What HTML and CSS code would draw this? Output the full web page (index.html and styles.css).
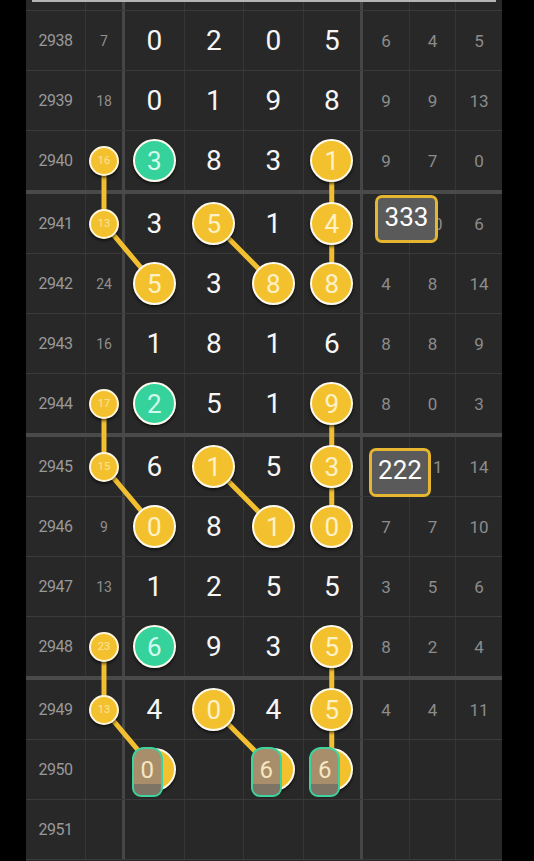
FILE: index.html
```html
<!DOCTYPE html>
<html lang="en">
<head>
    <meta charset="UTF-8">
    <meta name="viewport" content="width=device-width, initial-scale=1.0">
    <title>Trend Chart</title>
    <link rel="stylesheet" href="styles.css">
</head>
<body>
    <div class="board">
        <div class="top-line"></div>
        <div class="row stub">
            <div class="c"></div><div class="c sum"></div><div class="c"></div><div class="c"></div><div class="c"></div><div class="c d4"></div><div class="c"></div><div class="c"></div><div class="c last"></div>
        </div>

        <div class="row">
            <div class="c issue">2938</div><div class="c sum">7</div>
            <div class="c d">0</div><div class="c d">2</div><div class="c d">0</div><div class="c d d4">5</div>
            <div class="c r">6</div><div class="c r">4</div><div class="c r last">5</div>
        </div>
        <div class="row">
            <div class="c issue">2939</div><div class="c sum">18</div>
            <div class="c d">0</div><div class="c d">1</div><div class="c d">9</div><div class="c d d4">8</div>
            <div class="c r">9</div><div class="c r">9</div><div class="c r last">13</div>
        </div>
        <div class="row end">
            <div class="c issue">2940</div><div class="c sum"><span class="mini">16</span></div>
            <div class="c d"><span class="ball green">3</span></div><div class="c d">8</div><div class="c d">3</div><div class="c d d4"><span class="ball">1</span></div>
            <div class="c r">9</div><div class="c r">7</div><div class="c r last">0</div>
        </div>

        <div class="row">
            <div class="c issue">2941</div><div class="c sum"><span class="mini">13</span></div>
            <div class="c d">3</div><div class="c d"><span class="ball">5</span></div><div class="c d">1</div><div class="c d d4"><span class="ball">4</span></div>
            <div class="c r"></div><div class="c r peek">0</div><div class="c r last">6</div>
        </div>
        <div class="row">
            <div class="c issue">2942</div><div class="c sum">24</div>
            <div class="c d"><span class="ball">5</span></div><div class="c d">3</div><div class="c d"><span class="ball">8</span></div><div class="c d d4"><span class="ball">8</span></div>
            <div class="c r">4</div><div class="c r">8</div><div class="c r last">14</div>
        </div>
        <div class="row">
            <div class="c issue">2943</div><div class="c sum">16</div>
            <div class="c d">1</div><div class="c d">8</div><div class="c d">1</div><div class="c d d4">6</div>
            <div class="c r">8</div><div class="c r">8</div><div class="c r last">9</div>
        </div>
        <div class="row end">
            <div class="c issue">2944</div><div class="c sum"><span class="mini">17</span></div>
            <div class="c d"><span class="ball green">2</span></div><div class="c d">5</div><div class="c d">1</div><div class="c d d4"><span class="ball">9</span></div>
            <div class="c r">8</div><div class="c r">0</div><div class="c r last">3</div>
        </div>

        <div class="row">
            <div class="c issue">2945</div><div class="c sum"><span class="mini">15</span></div>
            <div class="c d">6</div><div class="c d"><span class="ball">1</span></div><div class="c d">5</div><div class="c d d4"><span class="ball">3</span></div>
            <div class="c r"></div><div class="c r peek">1</div><div class="c r last">14</div>
        </div>
        <div class="row">
            <div class="c issue">2946</div><div class="c sum">9</div>
            <div class="c d"><span class="ball">0</span></div><div class="c d">8</div><div class="c d"><span class="ball">1</span></div><div class="c d d4"><span class="ball">0</span></div>
            <div class="c r">7</div><div class="c r">7</div><div class="c r last">10</div>
        </div>
        <div class="row">
            <div class="c issue">2947</div><div class="c sum">13</div>
            <div class="c d">1</div><div class="c d">2</div><div class="c d">5</div><div class="c d d4">5</div>
            <div class="c r">3</div><div class="c r">5</div><div class="c r last">6</div>
        </div>
        <div class="row end">
            <div class="c issue">2948</div><div class="c sum"><span class="mini">23</span></div>
            <div class="c d"><span class="ball green">6</span></div><div class="c d">9</div><div class="c d">3</div><div class="c d d4"><span class="ball">5</span></div>
            <div class="c r">8</div><div class="c r">2</div><div class="c r last">4</div>
        </div>

        <div class="row">
            <div class="c issue">2949</div><div class="c sum"><span class="mini">13</span></div>
            <div class="c d">4</div><div class="c d"><span class="ball">0</span></div><div class="c d">4</div><div class="c d d4"><span class="ball">5</span></div>
            <div class="c r">4</div><div class="c r">4</div><div class="c r last">11</div>
        </div>
        <div class="row">
            <div class="c issue">2950</div><div class="c sum"></div>
            <div class="c d"><span class="ball"><span class="tag">0</span></span></div><div class="c d"></div>
            <div class="c d"><span class="ball"><span class="tag">6</span></span></div><div class="c d d4"><span class="ball"><span class="tag">6</span></span></div>
            <div class="c r"></div><div class="c r"></div><div class="c r last"></div>
        </div>
        <div class="row">
            <div class="c issue">2951</div><div class="c sum"></div>
            <div class="c d"></div><div class="c d"></div><div class="c d"></div><div class="c d d4"></div>
            <div class="c r"></div><div class="c r"></div><div class="c r last"></div>
        </div>

        <!-- connecting lines between hits -->
        <svg class="links" width="476" height="861" viewBox="0 0 476 861">
            <g fill="none" stroke="#f1bf2f" stroke-width="5" stroke-linecap="round" stroke-linejoin="round">
                <polyline points="78,160.5 78,223.5 128.25,283.5"/>
                <line x1="187.75" y1="223.5" x2="247.25" y2="283.5"/>
                <line x1="305.75" y1="160.5" x2="305.75" y2="283.5"/>
                <polyline points="78,403.5 78,466.5 128.25,526.5"/>
                <line x1="187.75" y1="466.5" x2="247.25" y2="526.5"/>
                <line x1="305.75" y1="403.5" x2="305.75" y2="526.5"/>
                <polyline points="78,646.5 78,709.5 128.25,769.5"/>
                <line x1="187.75" y1="709.5" x2="247.25" y2="769.5"/>
                <line x1="305.75" y1="646.5" x2="305.75" y2="769.5"/>
            </g>
        </svg>

        <div class="note note-a">333</div>
        <div class="note note-b">222</div>
    </div>
</body>
</html>
```

FILE: styles.css
```css
body {
    margin: 0;
    background-color: #000;
    font-family: Roboto, "Noto Sans", sans-serif;
    height: 861px;
    overflow: hidden;
}
.board {
    position: relative;
    z-index: 0;
    width: 476px;
    margin-left: 26px;
    background-color: #282828;
    height: 861px;
}
.top-line {
    height: 2px;
    margin: 0 6px;
    background-color: #b4b4b4;
}
.row {
    display: grid;
    grid-template-columns: 60px 39px 59.5px 59.5px 59.5px 59.5px 47px 46px 46px;
    height: 60px;
    box-sizing: border-box;
    border-bottom: 1px solid #3a3a3a;
}
.row.stub {
    height: 9px;
}
.row.end {
    height: 63px;
    border-bottom: 4px solid #4a4a4a;
}
.c {
    display: flex;
    align-items: center;
    justify-content: center;
    border-right: 1px solid #363636;
    box-sizing: border-box;
}
.c.last {
    border-right: none;
}
.c.sum,
.c.d4 {
    border-right: 3px solid #464646;
}
.issue {
    font-size: 16px;
    color: #999;
    letter-spacing: -0.5px;
}
.sum {
    font-size: 14px;
    color: #8f8f8f;
}
.d {
    font-size: 28px;
    color: #f6f6f6;
}
.r {
    font-size: 17px;
    color: #8c8c8c;
}
.r.peek {
    justify-content: flex-start;
    padding-left: 23px;
}
.ball {
    position: relative;
    z-index: 2;
    width: 43px;
    height: 43px;
    box-sizing: border-box;
    border-radius: 50%;
    border: 2.5px solid #fffaee;
    background-color: #f4c12e;
    color: #fff2c6;
    font-size: 26px;
    display: flex;
    align-items: center;
    justify-content: center;
    box-shadow: 0 2px 3px rgba(0, 0, 0, 0.6);
}
.ball.green {
    background-color: #36d29c;
    color: #d3fbec;
}
.mini {
    position: relative;
    z-index: 2;
    width: 30px;
    height: 30px;
    box-sizing: border-box;
    border-radius: 50%;
    border: 2px solid #fff6dc;
    background-color: #f4c12e;
    color: #fbe59a;
    font-size: 11px;
    display: flex;
    align-items: center;
    justify-content: center;
    box-shadow: 0 2px 3px rgba(0, 0, 0, 0.6);
}
.tag {
    position: absolute;
    left: -3px;
    top: -3px;
    width: 31px;
    height: 50px;
    box-sizing: border-box;
    border: 2px solid #3ed29c;
    border-radius: 12px 12px 9px 9px;
    background: linear-gradient(#a88e6b 0, #a88e6b 76%, #7e7466 76%);
    color: #f6e7c0;
    font-size: 24px;
    display: flex;
    justify-content: center;
    padding-top: 7px;
}
.links {
    position: absolute;
    left: 0;
    top: 0;
    z-index: 1;
    pointer-events: none;
}
.note {
    position: absolute;
    z-index: 3;
    box-sizing: border-box;
    border: 3px solid #e6b630;
    border-radius: 7px;
    background-color: #5a5a5a;
    color: #fdfdfd;
    font-size: 26px;
    text-align: center;
    line-height: 30px;
    padding-top: 4px;
}
.note-a {
    left: 349px;
    top: 195px;
    width: 63px;
    height: 48px;
}
.note-b {
    left: 343px;
    top: 448px;
    width: 62px;
    height: 49px;
}
```
